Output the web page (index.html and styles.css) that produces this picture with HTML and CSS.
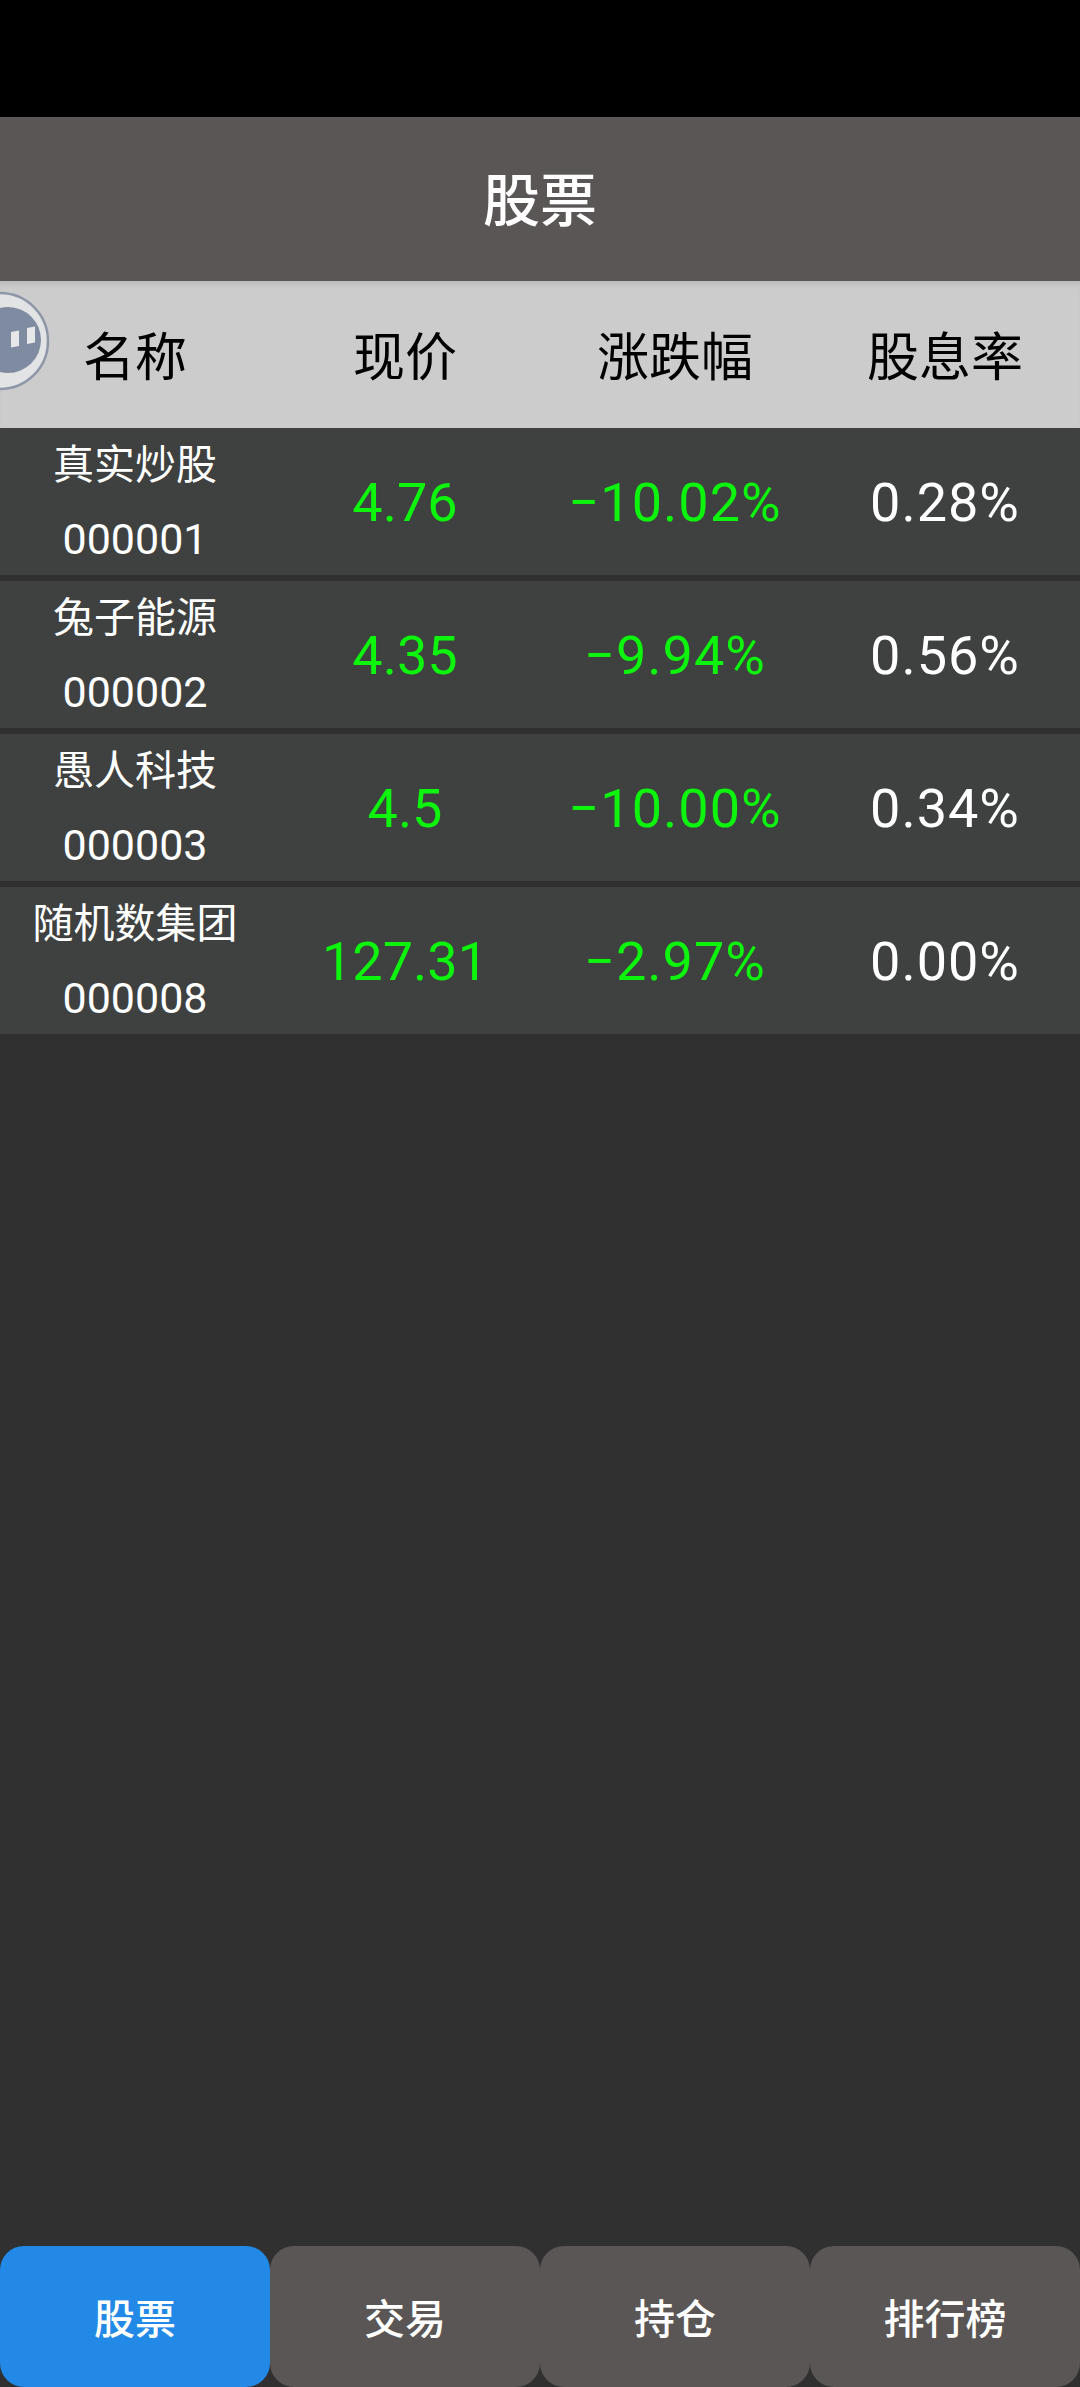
FILE: index.html
```html
<!DOCTYPE html>
<html lang="zh-CN">
<head>
  <meta charset="UTF-8">
  <meta name="viewport" content="width=device-width, initial-scale=1.0">
  <title>股票</title>
  <link rel="stylesheet" href="styles.css">
</head>
<body>
  <div class="status-bar"></div>
  <div class="title-bar"><span>股票</span></div>

  <div class="table-head">
    <div>名称</div>
    <div>现价</div>
    <div>涨跌幅</div>
    <div>股息率</div>
  </div>

  <div class="stock-list">
    <div class="stock-row">
      <div class="stock-name"><span>真实炒股</span><span class="code">000001</span></div>
      <div class="down">4.76</div>
      <div class="pct down">−10.02%</div>
      <div class="pct">0.28%</div>
    </div>
    <div class="stock-row">
      <div class="stock-name"><span>兔子能源</span><span class="code">000002</span></div>
      <div class="down">4.35</div>
      <div class="pct down">−9.94%</div>
      <div class="pct">0.56%</div>
    </div>
    <div class="stock-row">
      <div class="stock-name"><span>愚人科技</span><span class="code">000003</span></div>
      <div class="down">4.5</div>
      <div class="pct down">−10.00%</div>
      <div class="pct">0.34%</div>
    </div>
    <div class="stock-row">
      <div class="stock-name"><span>随机数集团</span><span class="code">000008</span></div>
      <div class="down">127.31</div>
      <div class="pct down">−2.97%</div>
      <div class="pct">0.00%</div>
    </div>
  </div>

  <div class="tabs">
    <div class="tab active">股票</div>
    <div class="tab">交易</div>
    <div class="tab">持仓</div>
    <div class="tab">排行榜</div>
  </div>

  <!-- floating assistant ball, half off the left edge -->
  <svg class="float-ball" width="50" height="100" viewBox="0 0 50 100">
    <circle cx="0" cy="50" r="48" fill="#e2e3e4" stroke="#8d97a8" stroke-width="2.5"/>
    <circle cx="8" cy="49" r="33" fill="#7f8ba0"/>
    <path d="M11 41 L19 39.500 L19 55 L11 56.500 Z" fill="#e6e7e9"/>
    <path d="M27 37 L35 35.500 L35 51.500 L27 53 Z" fill="#e6e7e9"/>
  </svg>
</body>
</html>
```

FILE: styles.css
```css
html, body {
  height: 100%;
}
body {
  margin: 0;
  height: 2387px;
  display: flex;
  flex-direction: column;
  position: relative;
  overflow: hidden;
  background: #303030;
  font-family: Roboto, "Noto Sans CJK SC", sans-serif;
  color: white;
}
.status-bar {
  height: 117px;
  background: black;
}
.title-bar {
  height: 164px;
  padding-bottom: 6px;
  box-sizing: border-box;
  background: #5a5655;
  display: flex;
  align-items: center;
  justify-content: center;
  font-size: 57px;
  font-weight: 500;
}
.table-head {
  height: 147px;
  padding-bottom: 2px;
  box-sizing: border-box;
  background: #cccccc;
  box-shadow: inset 0 6px 6px -4px rgba(0,0,0,0.12);
  display: grid;
  grid-template-columns: repeat(4, 270px);
  align-items: center;
  text-align: center;
  font-size: 52px;
  color: black;
}
.stock-list {
  flex: 1;
  display: flex;
  flex-direction: column;
  gap: 6px;
}
.stock-row {
  height: 147px;
  background: #3e413f;
  display: grid;
  grid-template-columns: repeat(4, 270px);
  align-items: center;
  text-align: center;
  font-size: 54px;
}
.stock-name {
  display: flex;
  flex-direction: column;
  font-size: 41px;
  line-height: 74px;
}
.code {
  font-size: 43px;
}
.pct {
  letter-spacing: 1px;
}
.down {
  color: #0df50d;
}
.tabs {
  height: 141px;
  display: flex;
}
.tab {
  width: 270px;
  padding-bottom: 2px;
  box-sizing: border-box;
  background: #5a5655;
  border-radius: 24px;
  display: flex;
  align-items: center;
  justify-content: center;
  font-size: 41px;
  font-weight: 500;
}
.tab.active {
  background: #2289e6;
}
.float-ball {
  position: absolute;
  left: 0;
  top: 291px;
}
```
